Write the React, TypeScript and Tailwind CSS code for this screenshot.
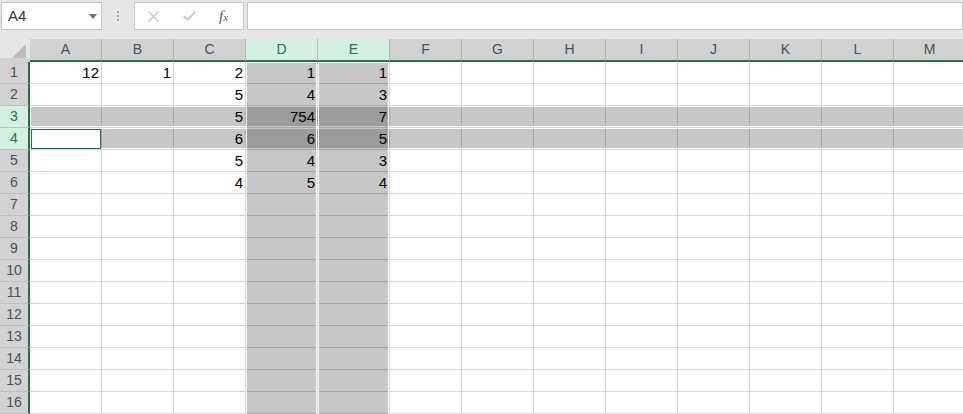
import React from "react";

const cols = ["A", "B", "C", "D", "E", "F", "G", "H", "I", "J", "K", "L", "M"];
const selCols = ["D", "E"];
const selRows = [3, 4];

const data: Record<string, string> = {
  A1: "12",
  B1: "1",
  C1: "2",
  D1: "1",
  E1: "1",
  C2: "5",
  D2: "4",
  E2: "3",
  C3: "5",
  D3: "754",
  E3: "7",
  C4: "6",
  D4: "6",
  E4: "5",
  C5: "5",
  D5: "4",
  E5: "3",
  C6: "4",
  D6: "5",
  E6: "4",
};

const rows = Array.from({ length: 16 }, (_, i) => i + 1);

const Toolbar = () => (
  <div className="flex h-[39px] items-start bg-[#e6e6e6] pl-[1px] pt-[2px]">
    <div className="relative flex h-[28px] w-[101px] items-center border border-[#c6c6c6] bg-white pl-[6px] text-[15px] text-[#333]">
      A4
      <svg className="absolute left-[87px] top-[11px]" width="8" height="5" viewBox="0 0 8 5">
        <path d="M0 0h8L4 5z" fill="#707070" />
      </svg>
    </div>
    <div className="flex w-[32px] flex-col items-center gap-[2px] pt-[9px]">
      <div className="h-[2px] w-[2px] bg-[#a8a8a8]" />
      <div className="h-[2px] w-[2px] bg-[#a8a8a8]" />
      <div className="h-[2px] w-[2px] bg-[#a8a8a8]" />
    </div>
    <div className="flex h-[28px] w-[110px] items-center border border-[#c6c6c6] bg-white">
      <svg className="ml-[13px]" width="11" height="11" viewBox="0 0 11 11">
        <path d="M0.5 0.5l10 10M10.5 0.5l-10 10" stroke="#c4c4c4" strokeWidth="1.3" />
      </svg>
      <svg className="ml-[24px]" width="13" height="10" viewBox="0 0 13 10">
        <path d="M0.8 5.2l3.6 3.6L12.3 0.8" stroke="#c4c4c4" strokeWidth="1.8" fill="none" />
      </svg>
      <span className="ml-[23px] font-['Liberation_Serif'] text-[15px] italic text-[#555]">
        f<span className="text-[11px]">x</span>
      </span>
    </div>
    <div className="ml-[3px] h-[28px] flex-1 border border-[#c6c6c6] bg-white" />
  </div>
);

const HeaderRow = () => (
  <div className="flex h-[23px]">
    <div className="relative h-[23px] w-[30px] shrink-0 bg-[#d2d2d2]">
      <div className="h-[19px] w-[30px] bg-[#e6e6e6]" />
      <svg className="absolute left-[12px] top-[5px]" width="14" height="14" viewBox="0 0 14 14">
        <path d="M14 0v14H0z" fill="#bdbdbd" />
      </svg>
    </div>
    {cols.map((c) => {
      const sel = selCols.includes(c);
      return (
        <div
          key={c}
          className={`flex h-[23px] w-[72px] shrink-0 items-center justify-center border-b-2 border-r border-b-[#217346] border-r-[#b4b4b4] pb-[1px] text-[14px] ${
            sel ? "bg-[#d3f0e0] text-[#217346]" : "bg-[#d2d2d2] text-[#3a5656]"
          }`}
        >
          {c}
        </div>
      );
    })}
  </div>
);

const Grid = () => (
  <div className="relative">
    {rows.map((r) => {
      const sel = selRows.includes(r);
      return (
        <div key={r} className="flex h-[22px]">
          <div
            className={`flex h-[22px] w-[30px] shrink-0 items-center justify-center border-b border-r-2 border-b-[#bfbfbf] border-r-[#217346] text-[14px] ${
              sel ? "bg-[#d3f0e0] text-[#217346]" : "bg-[#d2d2d2] text-[#3a5656]"
            }`}
          >
            {r}
          </div>
          {cols.map((c) => (
            <div
              key={c}
              className="flex h-[22px] w-[72px] shrink-0 items-end justify-end border-b border-r border-[#d4d4d4] pb-[1px] pr-[2px] text-[15px] leading-[18px] text-black"
            >
              {data[c + r] ?? ""}
            </div>
          ))}
        </div>
      );
    })}
    {/* selections */}
    <div className="absolute left-[30px] top-[44px] h-[21px] w-[940px] border border-white bg-black/[0.22]" />
    <div className="absolute left-[30px] top-[66px] h-[21px] w-[940px] border border-white bg-black/[0.22]" />
    <div className="absolute left-[246px] top-0 h-[360px] w-[71px] border border-white bg-black/[0.22]" />
    <div className="absolute left-[318px] top-0 h-[360px] w-[71px] border border-white bg-black/[0.22]" />
    <div className="absolute left-[31px] top-[67px] h-[20px] w-[70px] border border-[#217346] bg-white" />
  </div>
);

const App = () => {
  return (
    <div className="h-[414px] w-[963px] overflow-hidden bg-white font-['Liberation_Sans',sans-serif]">
      <Toolbar />
      <HeaderRow />
      <Grid />
    </div>
  );
};

export default App;
